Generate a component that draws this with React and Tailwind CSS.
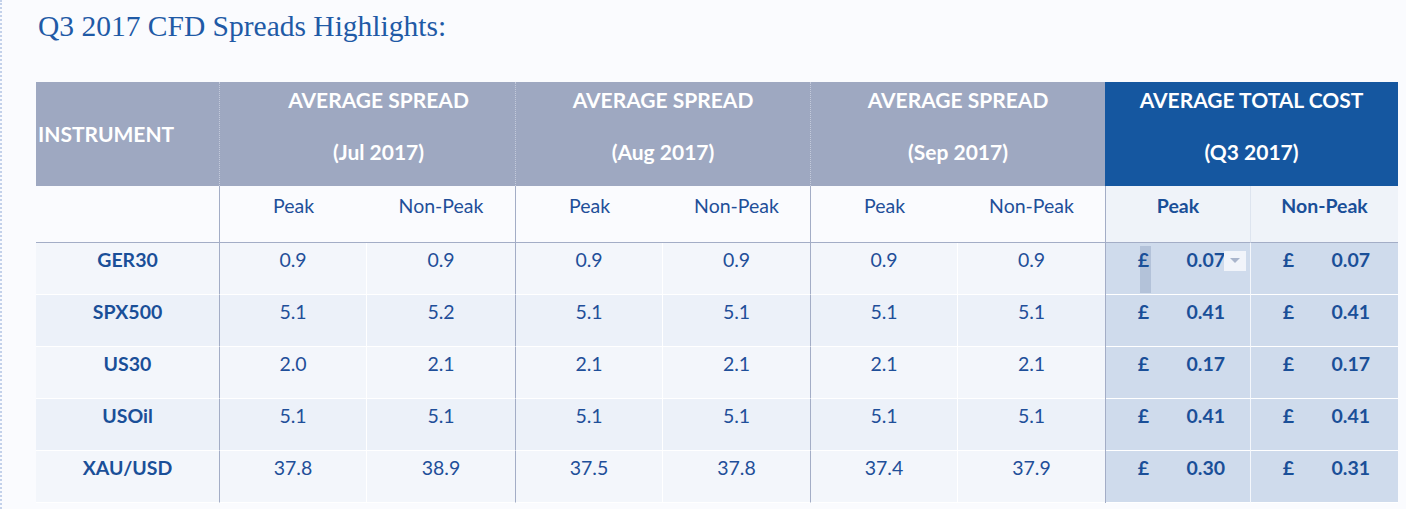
import React from 'react';

const rows = [
  { name: 'GER30', v: ['0.9', '0.9', '0.9', '0.9', '0.9', '0.9'], c: ['0.07', '0.07'] },
  { name: 'SPX500', v: ['5.1', '5.2', '5.1', '5.1', '5.1', '5.1'], c: ['0.41', '0.41'] },
  { name: 'US30', v: ['2.0', '2.1', '2.1', '2.1', '2.1', '2.1'], c: ['0.17', '0.17'] },
  { name: 'USOil', v: ['5.1', '5.1', '5.1', '5.1', '5.1', '5.1'], c: ['0.41', '0.41'] },
  { name: 'XAU/USD', v: ['37.8', '38.9', '37.5', '37.8', '37.4', '37.9'], c: ['0.30', '0.31'] },
];

const groups = [
  { label: 'Jul 2017', pad: 'pl-[22px]' },
  { label: 'Aug 2017', pad: '' },
  { label: 'Sep 2017', pad: '' },
];

function CostCell({ value, first, marked }) {
  return (
    <div className={`relative h-full border-b border-white pt-[5px] ${first ? 'border-r border-r-[#f4f7fc]' : ''}`}>
      {marked ? <div className="absolute left-[34px] top-[3px] w-[11px] h-[47px] bg-[#b3c2d9]" /> : null}
      <div className="relative flex items-start font-bold text-[#1a4f98]">
        <span className="w-[45px] text-right pr-[2px]">£</span>
        <span className="w-[74px] text-right">{value}</span>
      </div>
      {marked ? (
        <div className="absolute left-[118px] top-[8px] w-[22px] h-[20px] bg-[#f1f4fa] flex items-center justify-center">
          <svg width="10" height="6" viewBox="0 0 10 6"><path d="M0 0h10L5 5z" fill="#a9b5cc" /></svg>
        </div>
      ) : null}
    </div>
  );
}

export default function App() {
  return (
    <div className="w-[1406px] h-[509px] bg-[#fafbfe] border-l-2 border-dotted border-l-[#c3d1ea] overflow-hidden" style={{ fontFamily: 'Lato, "Open Sans", sans-serif' }}>
      <h1 className="pl-[36px] pt-[7px] h-[82px] text-[29.5px] leading-[38px] text-[#1f5aa6]" style={{ fontFamily: '"Liberation Serif", "Times New Roman", serif' }}>
        Q3 2017 CFD Spreads Highlights:
      </h1>

      <div className="ml-[34px] grid grid-cols-[183px_148px_148px_148px_147px_148px_147px_146px_147px] grid-rows-[104px_57px_52px_52px_52px_52px_52px] text-[19.5px] leading-[24px]">
        {/* header row */}
        <div className="bg-[#9ea8c1] text-white font-bold text-[21px] flex items-center pl-[2px] pb-[1px]">INSTRUMENT</div>
        {groups.map((g) => (
          <div key={g.label} className={`col-span-2 bg-[#9ea8c1] border-l border-dotted border-l-[#c4cadb] text-white font-bold text-[21px] flex flex-col items-center pt-[6px] gap-[28px] ${g.pad}`}>
            <div>AVERAGE SPREAD</div>
            <div>({g.label})</div>
          </div>
        ))}
        <div className="col-span-2 bg-[#1557a0] text-white font-bold text-[21px] flex flex-col items-center pt-[6px] gap-[28px]">
          <div>AVERAGE TOTAL COST</div>
          <div>(Q3 2017)</div>
        </div>

        {/* sub header */}
        <div className="bg-[#fafbfe] border-b border-b-[#a3adc6]" />
        {groups.map((g) => (
          <React.Fragment key={g.label}>
            <div className="bg-[#fafbfe] border-l border-l-[#a3adc6] border-b border-b-[#a3adc6] text-center pt-[8px] text-[#1f4f99]">Peak</div>
            <div className="bg-[#fafbfe] border-b border-b-[#a3adc6] text-center pt-[8px] text-[#1f4f99]">Non-Peak</div>
          </React.Fragment>
        ))}
        <div className="bg-[#eff3f9] border-l border-l-[#a3adc6] border-r border-r-[#dde4ef] border-b border-b-[#a3adc6] text-center pt-[8px] font-bold text-[#1a4f98]">Peak</div>
        <div className="bg-[#eff3f9] border-b border-b-[#a3adc6] text-center pt-[8px] font-bold text-[#1a4f98]">Non-Peak</div>

        {/* data rows */}
        {rows.map((r, i) => {
          const bg = i % 2 === 1 ? 'bg-[#ecf1f9]' : 'bg-[#f3f6fb]';
          return (
            <React.Fragment key={r.name}>
              <div className={`${bg} border-b border-white text-center pt-[5px] font-bold text-[#1a4f98]`}>{r.name}</div>
              {r.v.map((v, j) => (
                <div
                  key={j}
                  className={`${bg} border-b border-white text-center pt-[5px] text-[#1f4f99] ${j % 2 === 0 ? 'border-l border-l-[#a3adc6] border-r border-r-white' : ''}`}
                >
                  {v}
                </div>
              ))}
              <div className="bg-[#cfdbec] border-l border-l-[#a3adc6] h-full">
                <CostCell value={r.c[0]} first marked={i === 0} />
              </div>
              <div className="bg-[#cfdbec] h-full">
                <CostCell value={r.c[1]} />
              </div>
            </React.Fragment>
          );
        })}
      </div>
    </div>
  );
}
